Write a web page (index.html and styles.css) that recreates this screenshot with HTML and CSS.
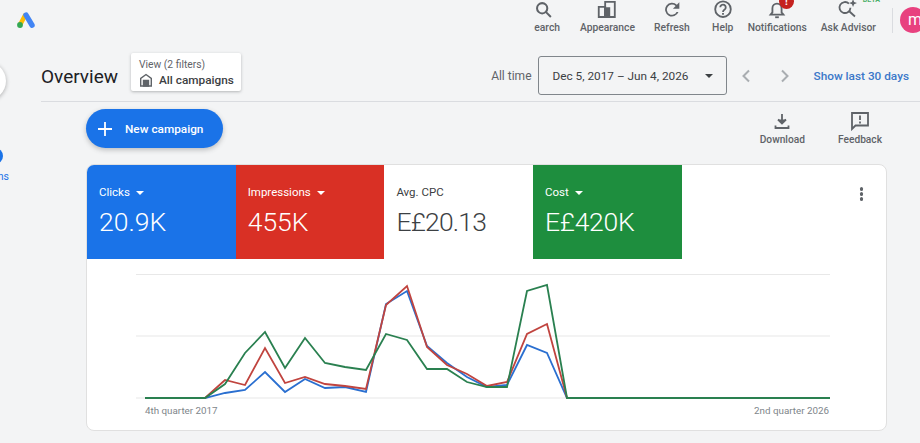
FILE: index.html
```html
<!DOCTYPE html>
<html lang="en">
<head>
    <meta charset="UTF-8">
    <meta name="viewport" content="width=device-width, initial-scale=1.0">
    <title>Overview</title>
    <link rel="stylesheet" href="styles.css">
</head>
<body>
    <!-- Top bar -->
    <div class="topbar">
        <svg class="logo" width="18" height="16" viewBox="0 0 18 16">
            <path d="M8 3.500 L3.500 12" stroke="#fbbc04" stroke-width="4.600" stroke-linecap="round"/>
            <path d="M9 3 L15 13.200" stroke="#4285f4" stroke-width="5.400" stroke-linecap="round"/>
            <circle cx="3" cy="13" r="2.900" fill="#34a853"/>
        </svg>
        <div class="top-actions">
            <div class="top-action search-action">
                <svg width="22" height="22" viewBox="0 0 24 24" fill="none" stroke="#5f6368" stroke-width="2.200"><circle cx="10" cy="9" r="5.600"/><path d="M14.200 13.200 L19.500 18.500"/></svg>
                <span>earch</span>
            </div>
            <div class="top-action">
                <svg width="22" height="22" viewBox="0 0 24 24" fill="none" stroke="#5f6368" stroke-width="2"><path d="M3 7.500h7V18.500H3z"/><path d="M10 18.500V2h10.500v16.500H10z"/><path d="M10 9h4.500v9.500H10z" fill="#5f6368"/></svg>
                <span>Appearance</span>
            </div>
            <div class="top-action refresh-action">
                <svg width="22" height="22" viewBox="0 0 24 24" fill="#5f6368"><path d="M17.300 5.200A7.500 7.500 0 1 0 19.050 13.060H17A5.600 5.600 0 1 1 15.950 6.550L13 9.500H20V2.500Z"/></svg>
                <span>Refresh</span>
            </div>
            <div class="top-action">
                <svg width="22" height="22" viewBox="0 0 24 24" fill="none" stroke="#5f6368" stroke-width="2"><circle cx="12" cy="10" r="8.500"/><path d="M9 8a3 3 0 1 1 4.800 2.400c-1.200.8-1.800 1.400-1.800 2.600"/><path d="M12 14.200v1.800"/></svg>
                <span>Help</span>
            </div>
            <div class="top-action">
                <svg width="22" height="22" viewBox="0 0 24 24" fill="none" stroke="#5f6368" stroke-width="2"><path d="M5 16h14l-2-2.500V9a5 5 0 0 0-10 0v4.500z"/><path d="M10 18.800h4"/></svg>
                <span>Notifications</span>
                <b class="alert">!</b>
            </div>
            <div class="top-action">
                <svg width="22" height="22" viewBox="0 0 24 24" fill="none" stroke="#5f6368" stroke-width="2"><path d="M13 4A6 6 0 1 0 14.700 8.500"/><path d="M13 12 L19.600 18"/><path d="M17.500 -1 l1.200 3.100 3.100 1.200-3.100 1.200-1.200 3.100-1.200-3.100-3.100-1.200 3.100-1.200z" fill="#5f6368" stroke="none"/></svg>
                <span>Ask Advisor</span>
                <b class="beta">BETA</b>
            </div>
        </div>
        <div class="top-divider"></div>
        <div class="avatar">m</div>
    </div>

    <div class="layout">
        <!-- Side rail, cut off by the window edge -->
        <div class="rail">
            <div class="rail-fab"></div>
            <div class="rail-dot"></div>
            <div class="rail-label">ns</div>
        </div>

        <div class="content">
            <div class="page-header">
                <h1>Overview</h1>
                <div class="view-filter">
                    <div class="view-label">View (2 filters)</div>
                    <div class="view-name">
                        <svg width="14" height="14" viewBox="0 0 14 14" fill="none" stroke="#5f6368" stroke-width="1.400"><path d="M1.700 13V5.400L7 1.500l5.300 3.900V13z"/><path d="M4.500 13V7.500h5V13z" fill="#5f6368"/></svg>
                        All campaigns
                    </div>
                </div>
                <div class="date-area">
                    <span class="all-time">All time</span>
                    <div class="date-select">
                        <span>Dec 5, 2017 – Jun 4, 2026</span>
                        <i class="caret dark"></i>
                    </div>
                    <svg class="chevron" width="10" height="14" viewBox="0 0 10 14" fill="none" stroke="#a9adb1" stroke-width="2"><path d="M8 1.500 L2.500 7 L8 12.500"/></svg>
                    <svg class="chevron next" width="10" height="14" viewBox="0 0 10 14" fill="none" stroke="#a9adb1" stroke-width="2"><path d="M2 1.500 L7.500 7 L2 12.500"/></svg>
                    <a class="last-days">Show last 30 days</a>
                </div>
            </div>

            <div class="toolbar">
                <button class="new-campaign">
                    <svg width="14" height="14" viewBox="0 0 14 14" stroke="#fff" stroke-width="1.800"><path d="M7 0v14M0 7h14"/></svg>
                    New campaign
                </button>
                <div class="tool-actions">
                    <div class="tool">
                        <svg width="20" height="20" viewBox="0 0 20 20" fill="none" stroke="#5f6368" stroke-width="1.800"><path d="M10 3v9"/><path d="M6 8.500 L10 12.500 L14 8.500" fill="#5f6368"/><path d="M3.500 14.500v2.500h13v-2.500"/></svg>
                        <span>Download</span>
                    </div>
                    <div class="tool">
                        <svg width="20" height="20" viewBox="0 0 20 20" fill="none" stroke="#5f6368" stroke-width="1.800"><path d="M2 2h16v12.500H5.500L2 18z"/><path d="M10 4.500v4.500M10 10.500v2"/></svg>
                        <span>Feedback</span>
                    </div>
                </div>
            </div>

            <!-- Metrics + chart -->
            <div class="card">
                <div class="metrics">
                    <div class="metric blue">
                        <div class="metric-label">Clicks <i class="caret"></i></div>
                        <div class="metric-value">20.9K</div>
                    </div>
                    <div class="metric red">
                        <div class="metric-label">Impressions <i class="caret"></i></div>
                        <div class="metric-value">455K</div>
                    </div>
                    <div class="metric plain">
                        <div class="metric-label">Avg. CPC</div>
                        <div class="metric-value">E£20.13</div>
                    </div>
                    <div class="metric green">
                        <div class="metric-label">Cost <i class="caret"></i></div>
                        <div class="metric-value">E£420K</div>
                    </div>
                    <div class="kebab"><i></i><i></i><i></i></div>
                </div>
                <svg class="chart" width="799" height="141" viewBox="87 259 799 141" fill="none">
                    <path d="M136 274.500H830M136 336H830M136 398H830" stroke="#e8e8e8" stroke-width="1.200"/>
                    <polyline stroke="#2a6fd0" stroke-width="1.800" points="145,398 205,398 225,393 245,390 265,372 285,392 305,379 325,388 345,387 366,392 386,304 407,291 427,346 447,363 467,377 487,387 507,385 527,345 547,353 567,398 830,398"/>
                    <polyline stroke="#c0443f" stroke-width="1.800" points="145,398 205,398 225,380 245,385 265,348 285,383 305,377 325,384 345,386 366,389 386,305 407,286 427,347 447,365 467,374 487,386 507,382 527,334 547,324 567,398 830,398"/>
                    <polyline stroke="#2a8050" stroke-width="1.800" points="145,398 205,398 225,384 245,353 265,332 285,368 305,338 325,363 345,367 366,370 386,334 407,340 427,369 447,369 467,382 487,387 507,387 527,291 547,285 567,398 830,398"/>
                </svg>
                <div class="axis">
                    <span>4th quarter 2017</span>
                    <span>2nd quarter 2026</span>
                </div>
            </div>
        </div>
    </div>
</body>
</html>
```

FILE: styles.css
```css
html, body {
    margin: 0;
    height: 443px;
    overflow: hidden;
}

body {
    background-color: #f3f4f5;
    font-family: Roboto, "Liberation Sans", sans-serif;
    color: #3c4043;
}

/* Top bar */
.topbar {
    display: flex;
    height: 48px;
    position: relative;
}

.logo {
    margin: 12px 0 0 17px;
}

.top-actions {
    display: flex;
    gap: 14px;
    margin-left: auto;
}

.top-action {
    position: relative;
    display: flex;
    flex-direction: column;
    align-items: center;
    font-size: 10.300px;
    font-weight: 500;
    color: #5f6368;
    line-height: 14px;
    height: 34px;
}

.top-action svg {
    height: 22px;
    margin-bottom: -1px;
    overflow: visible;
}

.top-action span {
    white-space: nowrap;
}

.search-action {
    margin-right: 6px;
}

.search-action svg {
    margin-left: -6px;
}

.refresh-action {
    margin: 0 8px 0 5px;
}

.alert {
    position: absolute;
    top: -6px;
    right: 13px;
    width: 15px;
    height: 15px;
    border-radius: 50%;
    background-color: #c5221f;
    color: #fff;
    font-size: 10px;
    line-height: 15px;
    text-align: center;
}

.beta {
    position: absolute;
    top: -4px;
    right: -4px;
    font-size: 7px;
    line-height: 8px;
    color: #4caf6a;
}

.top-divider {
    width: 1px;
    height: 25px;
    margin: 8px 7px 0 16px;
    background-color: #dadce0;
}

.avatar {
    flex: none;
    width: 26px;
    height: 26px;
    margin: 7px -6px 0 0;
    border-radius: 50%;
    background-color: #e8417f;
    color: #fff;
    font-size: 16px;
    line-height: 25px;
    padding-left: 8px;
    box-sizing: border-box;
}

.layout {
    display: flex;
}

/* Side rail */
.rail {
    flex: none;
    width: 12px;
    height: 395px;
    overflow: hidden;
    display: flex;
    flex-direction: column;
    align-items: flex-end;
}

.rail-fab {
    flex: none;
    width: 38px;
    height: 38px;
    margin: 14px 6px 0 0;
    border-radius: 50%;
    background-color: #fff;
    box-shadow: 0 1px 4px rgba(0, 0, 0, 0.3);
}

.rail-dot {
    flex: none;
    width: 16px;
    height: 16px;
    margin: 48px 9px 0 0;
    border-radius: 50%;
    background-color: #1a73e8;
}

.rail-label {
    margin: 6px 3px 0 0;
    font-size: 10.500px;
    line-height: 13px;
    color: #1a73e8;
}

.content {
    flex: 1;
    margin-left: 29px;
    min-width: 0;
}

/* Header row */
.page-header {
    display: flex;
    align-items: center;
    height: 53px;
    border-bottom: 1px solid #dadce0;
}

h1 {
    margin: 3px 13px 0 0;
    font-size: 19px;
    font-weight: 400;
    color: #202124;
}

.view-filter {
    width: 110px;
    height: 38px;
    margin-top: -6px;
    padding: 5px 0 0 8px;
    box-sizing: border-box;
    background-color: #fff;
    border-radius: 2px;
    box-shadow: 0 1px 3px rgba(60, 64, 67, 0.35);
}

.view-label {
    font-size: 10.300px;
    line-height: 13px;
    color: #5f6368;
}

.view-name {
    display: flex;
    align-items: center;
    gap: 6px;
    margin-top: 2px;
    font-size: 11.800px;
    font-weight: 500;
    line-height: 15px;
}

.date-area {
    display: flex;
    align-items: center;
    margin-left: auto;
    margin-right: 11px;
    padding-top: 2px;
}

.all-time {
    font-size: 12px;
    color: #5f6368;
    margin-right: 6px;
}

.date-select {
    display: flex;
    align-items: center;
    justify-content: space-between;
    width: 189px;
    height: 39px;
    padding: 0 13px 0 14px;
    box-sizing: border-box;
    border: 1px solid #80868b;
    border-radius: 3px;
    font-size: 11.800px;
    color: #3c4043;
}

.caret {
    display: inline-block;
    width: 0;
    height: 0;
    margin-left: 3px;
    vertical-align: middle;
    border-left: 4.500px solid transparent;
    border-right: 4.500px solid transparent;
    border-top: 4.500px solid #fff;
}

.caret.dark {
    border-top-color: #3c4043;
}

.chevron {
    margin-left: 14px;
}

.chevron.next {
    margin-left: 29px;
}

.last-days {
    margin-left: 24px;
    font-size: 11.800px;
    font-weight: 500;
    color: #3b78c9;
    white-space: nowrap;
}

/* New campaign + tools */
.toolbar {
    display: flex;
    justify-content: space-between;
    height: 62px;
    margin: 0 33px 0 45px;
}

.new-campaign {
    display: flex;
    align-items: center;
    gap: 13px;
    width: 137px;
    height: 39px;
    margin-top: 7px;
    padding: 0 0 0 12px;
    border: none;
    border-radius: 20px;
    background-color: #1a73e8;
    color: #fff;
    font-family: inherit;
    font-size: 11.800px;
    font-weight: 500;
    box-shadow: 0 2px 5px rgba(60, 64, 67, 0.3);
}

.tool-actions {
    display: flex;
    gap: 33px;
    margin-top: 9px;
    margin-right: 5px;
}

.tool {
    display: flex;
    flex-direction: column;
    align-items: center;
    gap: 3px;
    font-size: 10.200px;
    font-weight: 500;
    color: #5f6368;
}

/* Card */
.card {
    margin: 0 33px 0 45px;
    height: 267px;
    box-sizing: border-box;
    background-color: #fff;
    border: 1px solid #e0e0e0;
    border-radius: 8px;
    overflow: hidden;
}

.metrics {
    display: flex;
    height: 94px;
}

.metric {
    width: 148.700px;
    padding: 20px 0 0 12px;
    box-sizing: border-box;
    color: #fff;
}

.metric.blue {
    background-color: #1a73e8;
}

.metric.red {
    background-color: #d93025;
}

.metric.green {
    background-color: #1e8e3e;
}

.metric.plain {
    color: #3c4043;
}

.metric-label {
    font-size: 11.500px;
    line-height: 15px;
}

.metric-value {
    margin-top: 6px;
    font-size: 26.500px;
    font-weight: 300;
    line-height: 32px;
}

.plain .metric-value {
    letter-spacing: -0.8px;
}

.green .metric-value {
    letter-spacing: -0.3px;
}

.kebab {
    display: flex;
    flex-direction: column;
    gap: 1.500px;
    margin: 22px 23px 0 auto;
}

.kebab i {
    width: 3.500px;
    height: 3.500px;
    border-radius: 50%;
    background-color: #5f6368;
}

.chart {
    display: block;
}

.axis {
    display: flex;
    justify-content: space-between;
    margin: 4px 57px 0 58px;
    font-size: 9.800px;
    line-height: 13px;
    color: #80868b;
}
```
